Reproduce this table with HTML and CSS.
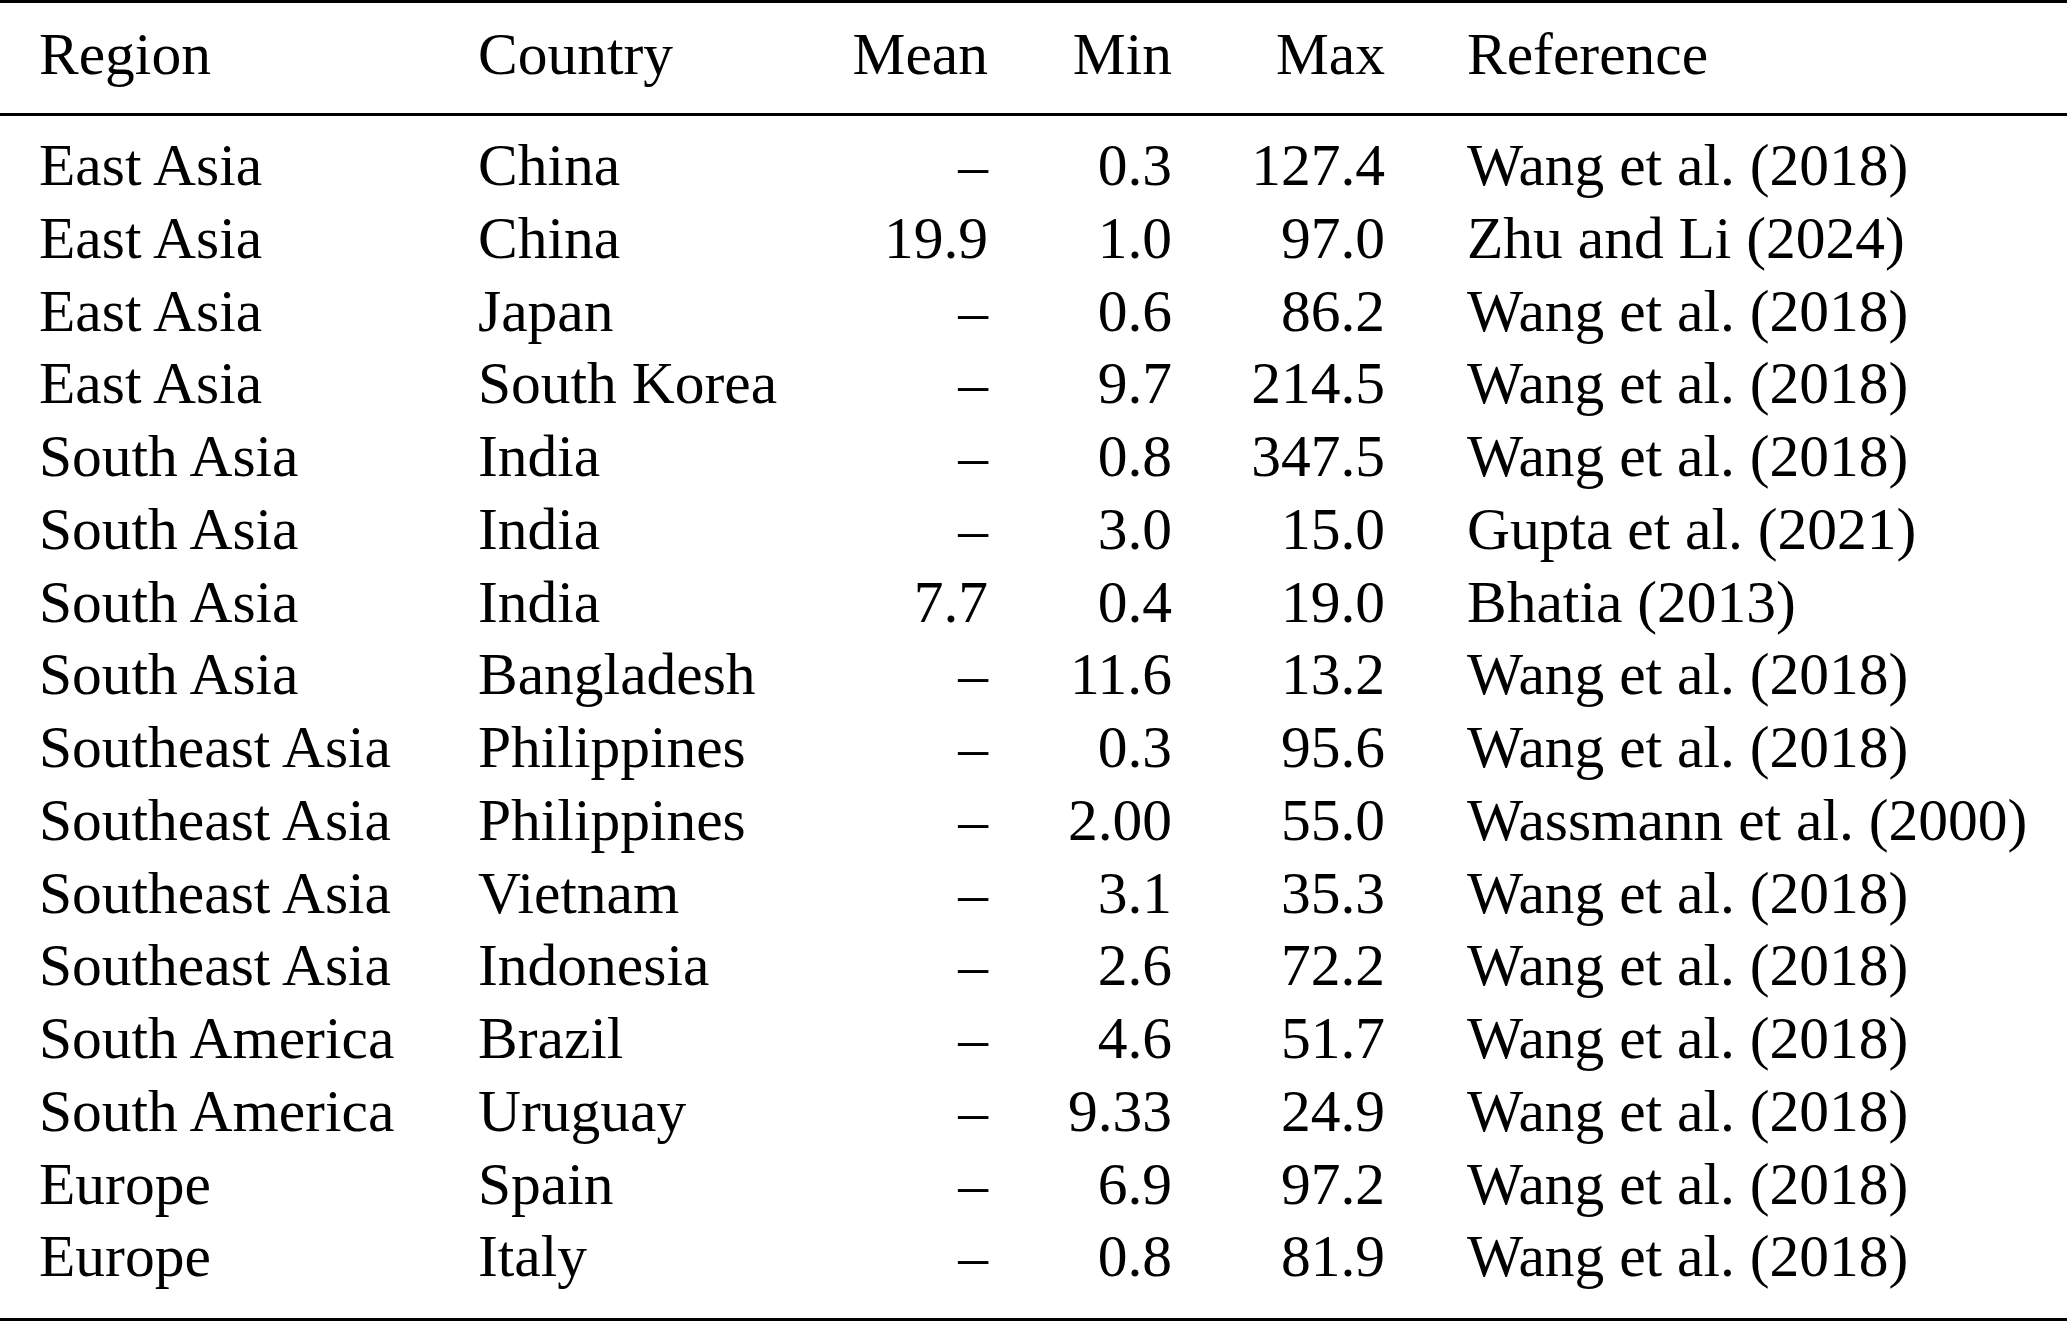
FILE: index.html
```html
<!DOCTYPE html>
<html lang="en">
<head>
<meta charset="utf-8">
<title>Table</title>
<link rel="stylesheet" href="styles.css">
</head>
<body>
<table class="data">
  <colgroup>
    <col class="w1"><col class="w2"><col class="w3"><col class="w4"><col class="w5"><col class="w6">
  </colgroup>
  <thead>
    <tr>
      <th class="c1">Region</th>
      <th class="c2">Country</th>
      <th class="num">Mean</th>
      <th class="num">Min</th>
      <th class="num">Max</th>
      <th class="c6">Reference</th>
    </tr>
  </thead>
  <tbody>
    <tr><td class="c1">East Asia</td><td class="c2">China</td><td class="num">–</td><td class="num">0.3</td><td class="num">127.4</td><td class="c6">Wang et al. (2018)</td></tr>
    <tr><td class="c1">East Asia</td><td class="c2">China</td><td class="num">19.9</td><td class="num">1.0</td><td class="num">97.0</td><td class="c6">Zhu and Li (2024)</td></tr>
    <tr><td class="c1">East Asia</td><td class="c2">Japan</td><td class="num">–</td><td class="num">0.6</td><td class="num">86.2</td><td class="c6">Wang et al. (2018)</td></tr>
    <tr><td class="c1">East Asia</td><td class="c2">South Korea</td><td class="num">–</td><td class="num">9.7</td><td class="num">214.5</td><td class="c6">Wang et al. (2018)</td></tr>
    <tr><td class="c1">South Asia</td><td class="c2">India</td><td class="num">–</td><td class="num">0.8</td><td class="num">347.5</td><td class="c6">Wang et al. (2018)</td></tr>
    <tr><td class="c1">South Asia</td><td class="c2">India</td><td class="num">–</td><td class="num">3.0</td><td class="num">15.0</td><td class="c6">Gupta et al. (2021)</td></tr>
    <tr><td class="c1">South Asia</td><td class="c2">India</td><td class="num">7.7</td><td class="num">0.4</td><td class="num">19.0</td><td class="c6">Bhatia (2013)</td></tr>
    <tr><td class="c1">South Asia</td><td class="c2">Bangladesh</td><td class="num">–</td><td class="num">11.6</td><td class="num">13.2</td><td class="c6">Wang et al. (2018)</td></tr>
    <tr><td class="c1">Southeast Asia</td><td class="c2">Philippines</td><td class="num">–</td><td class="num">0.3</td><td class="num">95.6</td><td class="c6">Wang et al. (2018)</td></tr>
    <tr><td class="c1">Southeast Asia</td><td class="c2">Philippines</td><td class="num">–</td><td class="num">2.00</td><td class="num">55.0</td><td class="c6">Wassmann et al. (2000)</td></tr>
    <tr><td class="c1">Southeast Asia</td><td class="c2">Vietnam</td><td class="num">–</td><td class="num">3.1</td><td class="num">35.3</td><td class="c6">Wang et al. (2018)</td></tr>
    <tr><td class="c1">Southeast Asia</td><td class="c2">Indonesia</td><td class="num">–</td><td class="num">2.6</td><td class="num">72.2</td><td class="c6">Wang et al. (2018)</td></tr>
    <tr><td class="c1">South America</td><td class="c2">Brazil</td><td class="num">–</td><td class="num">4.6</td><td class="num">51.7</td><td class="c6">Wang et al. (2018)</td></tr>
    <tr><td class="c1">South America</td><td class="c2">Uruguay</td><td class="num">–</td><td class="num">9.33</td><td class="num">24.9</td><td class="c6">Wang et al. (2018)</td></tr>
    <tr><td class="c1">Europe</td><td class="c2">Spain</td><td class="num">–</td><td class="num">6.9</td><td class="num">97.2</td><td class="c6">Wang et al. (2018)</td></tr>
    <tr><td class="c1">Europe</td><td class="c2">Italy</td><td class="num">–</td><td class="num">0.8</td><td class="num">81.9</td><td class="c6">Wang et al. (2018)</td></tr>
  </tbody>
</table>
</body>
</html>
```

FILE: styles.css
```css
html, body {
  margin: 0;
  padding: 0;
  background: #ffffff;
}

.data {
  width: 2067px;
  table-layout: fixed;
  border-collapse: separate;
  border-spacing: 0;
  font-family: "Liberation Serif", "Times New Roman", serif;
  font-size: 59.5px;
  line-height: 72.73px;
  color: #000000;
}

.w1 { width: 440px; }
.w2 { width: 320px; }
.w3 { width: 268px; }
.w4 { width: 184px; }
.w5 { width: 213px; }
.w6 { width: 642px; }

.data th,
.data td {
  padding: 0;
  white-space: nowrap;
  font-weight: normal;
  vertical-align: top;
}

.data th {
  border-top: 3px solid #000000;
  border-bottom: 3px solid #000000;
  padding-top: 14.56px;
  padding-bottom: 22.7px;
}

.data tbody tr:first-child td {
  padding-top: 13.26px;
}

.data tbody tr:last-child td {
  padding-bottom: 25px;
  border-bottom: 3px solid #000000;
}

.c1 {
  text-align: left;
  padding-left: 39px !important;
}

.c2 {
  text-align: left;
  padding-left: 38px !important;
}

.num {
  text-align: right;
  padding-right: 40px !important;
}

.c6 {
  text-align: left;
  padding-left: 42px !important;
}
```
